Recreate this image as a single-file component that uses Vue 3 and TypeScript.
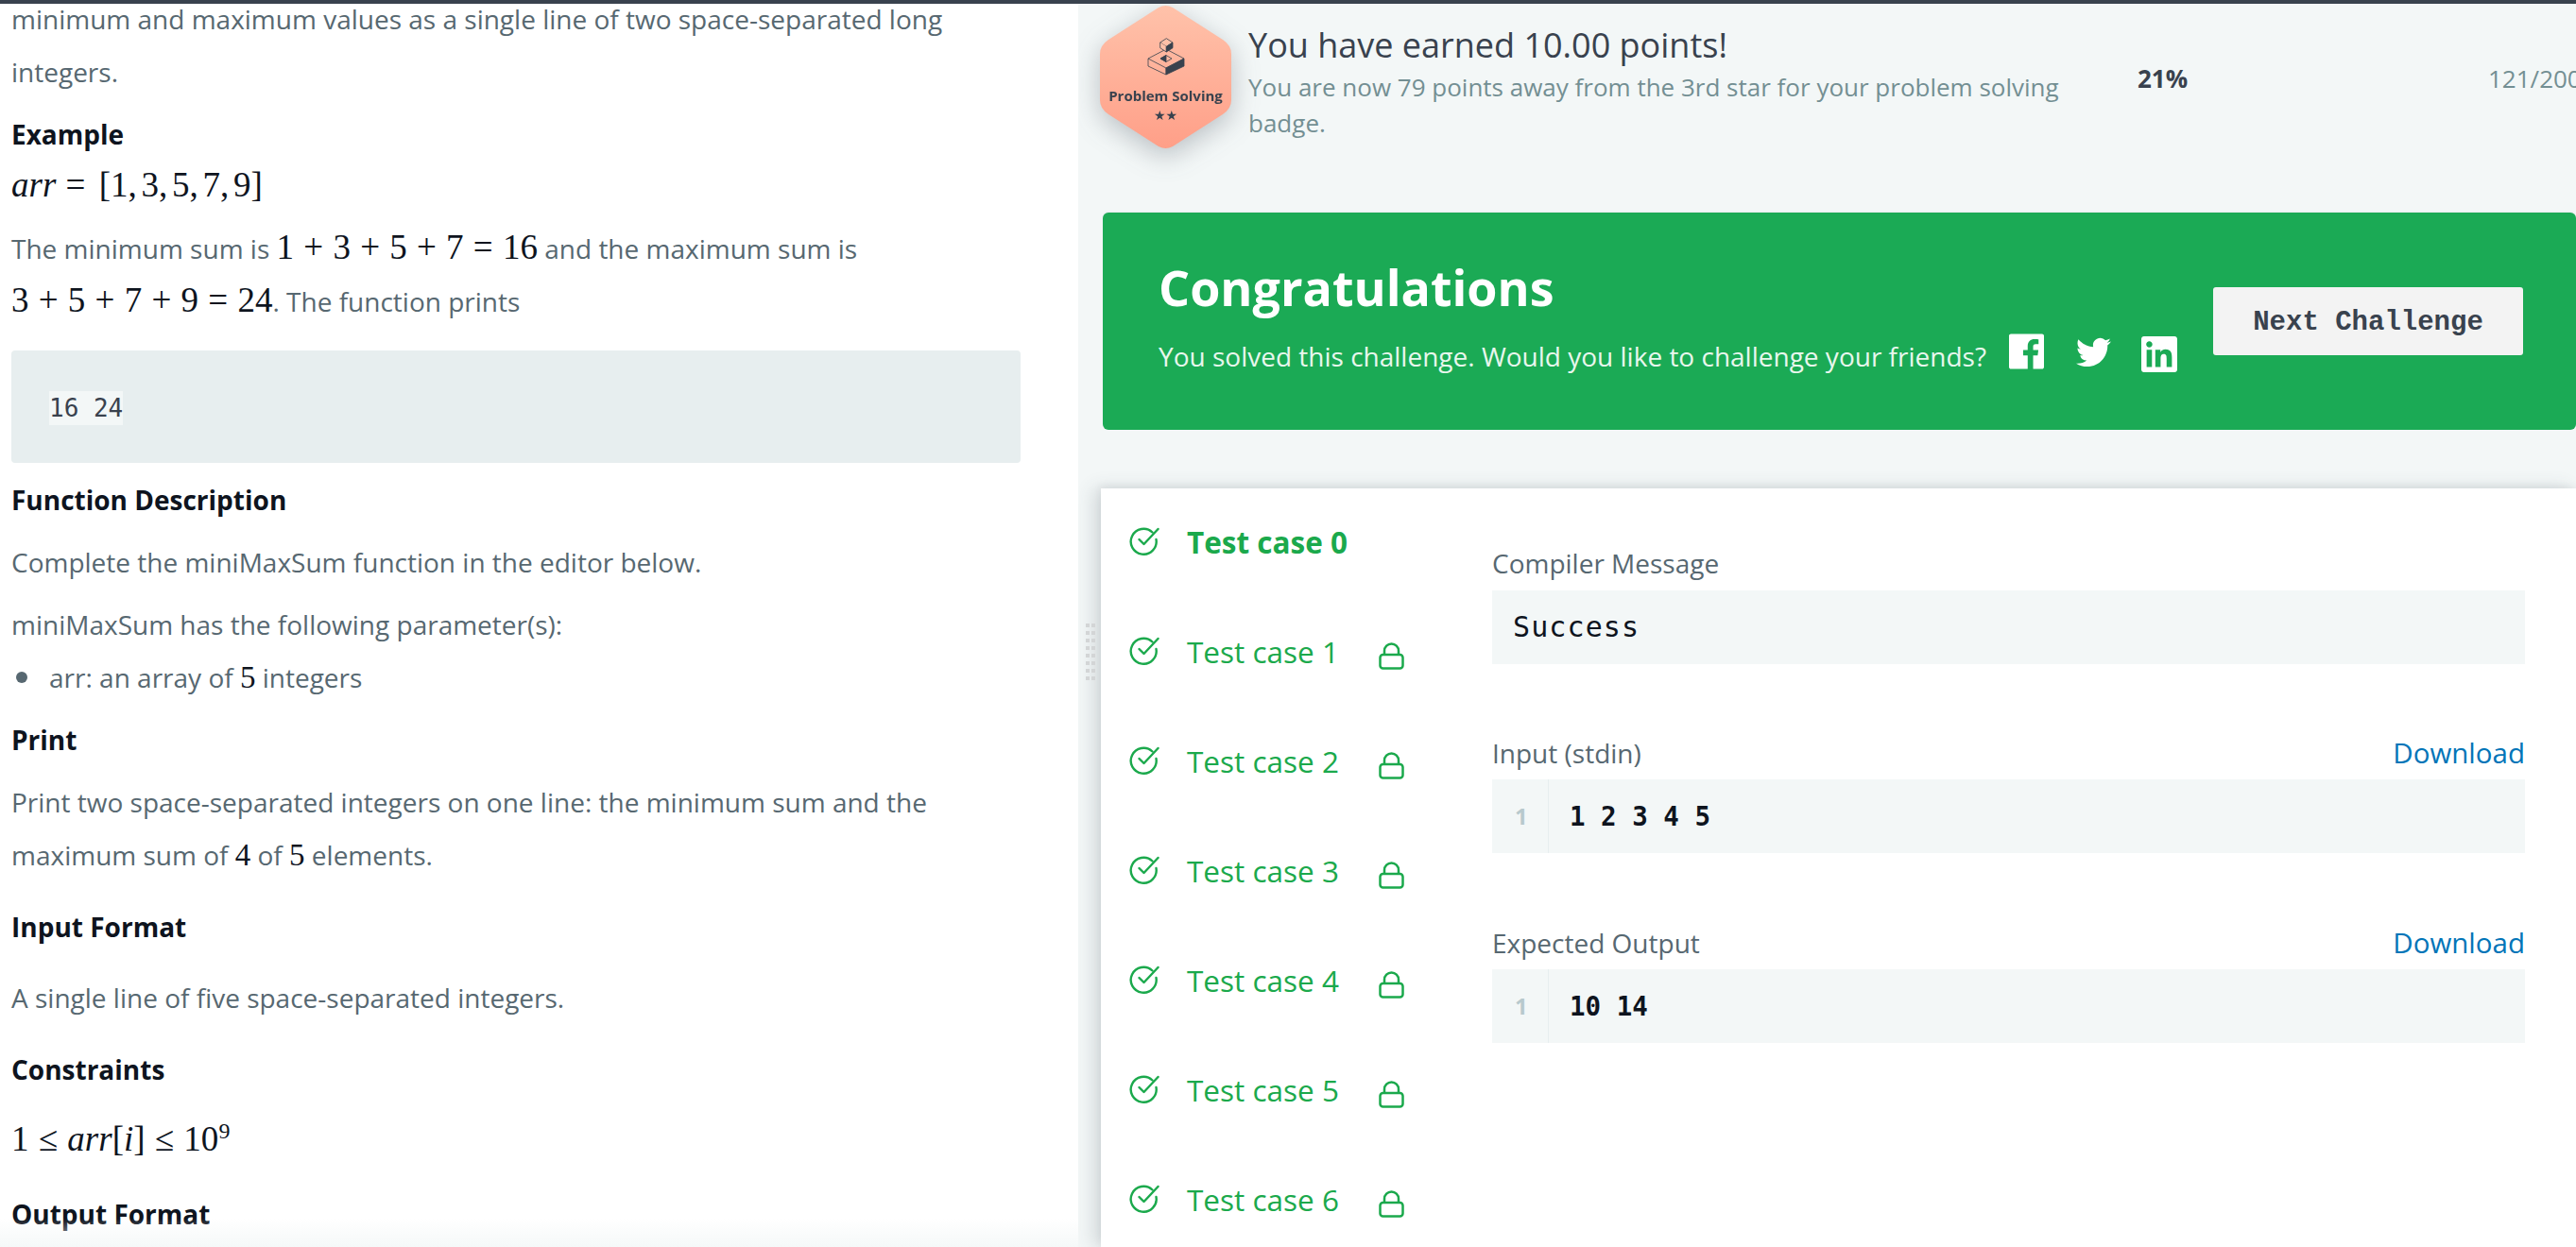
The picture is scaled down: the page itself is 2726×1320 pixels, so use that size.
<template>
  <div class="page">
    <div class="topbar"></div>
    <div class="columns">
      <section class="problem">
        <div class="problem-body">
          <p class="para">minimum and maximum values as a single line of two space-separated long<br />integers.</p>
          <h4 class="head mt-18">Example</h4>
          <p class="para mt-7"><span class="math math-big"><i>arr</i> = <span class="math-list">[1, 3, 5, 7, 9]</span></span></p>
          <p class="para mt-10">
            The minimum sum is <span class="math math-big">1 + 3 + 5 + 7 = 16</span> and the maximum sum is<br />
            <span class="math math-big">3 + 5 + 7 + 9 = 24</span>. The function prints
          </p>
          <pre class="sample"><code>16 24</code></pre>
          <h4 class="head mt-19">Function Description</h4>
          <p class="para mt-18">Complete the miniMaxSum function in the editor below.</p>
          <p class="para mt-10">miniMaxSum has the following parameter(s):</p>
          <ul class="params">
            <li>arr: an array of <span class="math">5</span> integers</li>
          </ul>
          <h4 class="head mt-18">Print</h4>
          <p class="para mt-18">
            Print two space-separated integers on one line: the minimum sum and the<br />
            maximum sum of <span class="math">4</span> of <span class="math">5</span> elements.
          </p>
          <h4 class="head mt-28">Input Format</h4>
          <p class="para mt-27">A single line of five space-separated integers.</p>
          <h4 class="head mt-28">Constraints</h4>
          <p class="para mt-27">
            <span class="math math-big">1 ≤ <i>arr</i>[<i>i</i>] ≤ 10<sup>9</sup></span>
          </p>
          <h4 class="head mt-30">Output Format</h4>
        </div>
        <div class="fade"></div>
      </section>

      <section class="result">
        <div class="grip">
          <span v-for="n in 16" :key="n"></span>
        </div>

        <header class="earned">
          <div class="badge">
            <svg class="badge-bg" width="139" height="153" viewBox="0 0 139 153">
              <defs>
                <linearGradient id="badgeFill" x1="0" y1="0" x2="0" y2="1">
                  <stop offset="0" stop-color="#ffc2aa" />
                  <stop offset="1" stop-color="#ff9f88" />
                </linearGradient>
              </defs>
              <path
                d="M62 3 Q69.500 -1 77 3 L130 37 Q139 43 139 52 L139 101 Q139 110 130 116 L77 150 Q69.500 154 62 150 L9 116 Q0 110 0 101 L0 52 Q0 43 9 37 Z"
                fill="url(#badgeFill)"
              />
              <g fill="none" stroke="#39424e" stroke-width="0.8" stroke-linejoin="round">
                <path d="M51 57 L70 47 L89 57 L70 67 Z" />
                <path d="M51 57 V65 L70 74 V67" />
                <path d="M70 67 L89 57 V65 L70 74 Z" fill="#39424e" />
                <path d="M64 57 L70 53.500 L76 57 L70 60.500 Z" fill="#ffb8a0" />
                <path d="M70 53.500 L64 57 L70 60.500 Z" fill="#39424e" />
                <path d="M70.300 35.700 L63.700 40 L70.300 44.300 L77 40 Z" fill="#ffc0a8" />
                <path d="M63.700 40 V45.700 L70.300 50 V44.300" fill="#ffc0a8" />
                <path d="M70.300 44.300 L77 40 V45.700 L70.300 50 Z" fill="#39424e" />
              </g>
            </svg>
            <div class="badge-name">Problem Solving</div>
            <div class="badge-stars">★★</div>
          </div>
          <div class="earned-text">
            <div class="earned-title">You have earned 10.00 points!</div>
            <div class="earned-sub">You are now 79 points away from the 3rd star for your problem solving badge.</div>
          </div>
          <div class="percent">21%</div>
          <div class="fraction">121/200</div>
        </header>

        <div class="congrats">
          <div class="congrats-copy">
            <h2 class="congrats-title">Congratulations</h2>
            <div class="congrats-line">
              <span>You solved this challenge. Would you like to challenge your friends?</span>
              <svg class="social fb" width="37" height="38" viewBox="0 0 24 24" fill="#fff">
                <path d="M22.675 0H1.325C.593 0 0 .593 0 1.325v21.351C0 23.407.593 24 1.325 24H12.820v-9.294H9.692v-3.622h3.128V8.413c0-3.100 1.893-4.788 4.659-4.788 1.325 0 2.463.099 2.795.143v3.240l-1.918.001c-1.504 0-1.795.715-1.795 1.763v2.313h3.587l-.467 3.622h-3.120V24h6.116c.730 0 1.323-.593 1.323-1.325V1.325C24 .593 23.407 0 22.675 0z" />
              </svg>
              <svg class="social tw" width="37" height="32" viewBox="0 0 24 20" fill="#fff">
                <path d="M23.953 2.570a10 10 0 01-2.825.775 4.958 4.958 0 002.163-2.723c-.951.555-2.005.959-3.127 1.184a4.920 4.920 0 00-8.384 4.482C7.690 6.095 4.067 4.130 1.640 1.162a4.822 4.822 0 00-.666 2.475c0 1.710.870 3.213 2.188 4.096a4.904 4.904 0 01-2.228-.616v.060a4.923 4.923 0 003.946 4.827 4.996 4.996 0 01-2.212.085 4.936 4.936 0 004.604 3.417 9.867 9.867 0 01-6.102 2.105c-.390 0-.779-.023-1.170-.067a13.995 13.995 0 007.557 2.209c9.053 0 13.998-7.496 13.998-13.985 0-.210 0-.420-.015-.630A9.935 9.935 0 0024 2.590z" />
              </svg>
              <svg class="social in" width="38" height="38" viewBox="0 0 24 24" fill="#fff">
                <path d="M20.447 20.452h-3.554v-5.569c0-1.328-.027-3.037-1.852-3.037-1.853 0-2.136 1.445-2.136 2.939v5.667H9.351V9h3.414v1.561h.046c.477-.900 1.637-1.850 3.370-1.850 3.601 0 4.267 2.370 4.267 5.455v6.286zM5.337 7.433c-1.144 0-2.063-.926-2.063-2.065 0-1.138.920-2.063 2.063-2.063 1.140 0 2.064.925 2.064 2.063 0 1.139-.925 2.065-2.064 2.065zm1.782 13.019H3.555V9h3.564v11.452zM22.225 0H1.771C.792 0 0 .774 0 1.729v20.542C0 23.227.792 24 1.771 24h20.451C23.200 24 24 23.227 24 22.271V1.729C24 .774 23.200 0 22.222 0h.003z" />
              </svg>
            </div>
          </div>
          <button class="next-btn">Next Challenge</button>
        </div>

        <div class="tests">
          <ul class="case-list">
            <li v-for="tc in cases" :key="tc.id" class="case" :class="{ 'case-active': tc.id === 0 }">
              <svg class="check" width="32" height="30" viewBox="0 0 32 30" fill="none" stroke="#1ba94c" stroke-width="2.400" stroke-linecap="round" stroke-linejoin="round">
                <path d="M24.500 5.500 A13.500 13.500 0 1 0 28.500 13" />
                <path d="M10.500 13 L15.500 18 L30.500 2" />
              </svg>
              <span class="case-name">Test case {{ tc.id }}</span>
              <svg v-if="tc.locked" class="lock" width="27" height="29" viewBox="0 0 27 29" fill="none" stroke="#1ba94c" stroke-width="2.500" stroke-linejoin="round">
                <rect x="1.500" y="13" width="24" height="14.500" rx="3" />
                <path d="M6 13 V9 a7.500 7.500 0 0 1 15 0 V13" />
              </svg>
            </li>
          </ul>
          <div class="detail">
            <div class="label first">Compiler Message</div>
            <div class="message">Success</div>
            <div v-for="blk in blocks" :key="blk.title" class="io">
              <div class="label-row">
                <span class="label">{{ blk.title }}</span>
                <a class="download">Download</a>
              </div>
              <div class="io-box">
                <span class="gutter">1</span>
                <code class="io-code">{{ blk.value }}</code>
              </div>
            </div>
          </div>
        </div>
      </section>
    </div>
  </div>
</template>

<script setup lang="ts">
interface TestCase {
  id: number;
  locked: boolean;
}

const cases: TestCase[] = [0, 1, 2, 3, 4, 5, 6].map((id) => ({ id, locked: id !== 0 }));

const blocks = [
  { title: 'Input (stdin)', value: '1 2 3 4 5' },
  { title: 'Expected Output', value: '10 14' },
];
</script>

<style>
html,
body {
  margin: 0;
  overflow: hidden;
}
</style>

<style scoped>
.page {
  width: 2726px;
  height: 1320px;
  overflow: hidden;
  display: flex;
  flex-direction: column;
  font-family: "Open Sans", sans-serif;
  background: #fff;
}

.topbar {
  height: 4px;
  background: #39424e;
  flex-shrink: 0;
}

.columns {
  flex: 1;
  display: flex;
  min-height: 0;
}

.problem {
  position: relative;
  width: 1141px;
  flex-shrink: 0;
  overflow: hidden;
  background: #fff;
}

.problem-body {
  margin-top: -12px;
  padding: 0 60px 0 12px;
}

.para {
  margin: 0;
  font-size: 28px;
  line-height: 56px;
  color: #576871;
}

.head {
  margin: 0;
  font-size: 28px;
  line-height: 40px;
  font-weight: 700;
  color: #0e141e;
}

.mt-7 { margin-top: 7px; }
.mt-10 { margin-top: 10px; }
.mt-18 { margin-top: 18px; }
.mt-19 { margin-top: 19px; }
.mt-27 { margin-top: 27px; }
.mt-28 { margin-top: 28px; }
.mt-30 { margin-top: 30px; }

.math {
  font-family: "Liberation Serif", serif;
  font-size: 33px;
  line-height: 0;
  color: #0e141e;
}

.math-big {
  font-size: 37px;
  word-spacing: 1px;
}

.math-list {
  margin-left: 4px;
  word-spacing: -4.500px;
}

.math sup {
  font-size: 24px;
  line-height: 0;
}

.sample {
  margin: 24px 0 0;
  width: 1068px;
  height: 119px;
  padding: 43px 0 0 40px;
  box-sizing: border-box;
  background: #e7eeef;
  border-radius: 4px;
  font-family: "DejaVu Sans Mono", monospace;
  font-size: 26px;
  line-height: 36px;
  color: #39424e;
}

.sample code {
  display: inline-block;
  background: #f3f7f7;
  font-family: inherit;
}

.params {
  margin: 0;
  padding: 0;
  list-style: none;
  font-size: 28px;
  line-height: 56px;
  color: #576871;
}

.params li {
  display: flex;
  align-items: center;
  white-space: pre;
}

.params li::before {
  content: "";
  width: 12px;
  height: 12px;
  margin: 0 23px 0 5px;
  border-radius: 50%;
  background: #576871;
}

.fade {
  position: absolute;
  left: 0;
  right: 0;
  bottom: 0;
  height: 30px;
  background: linear-gradient(rgba(243, 247, 247, 0), rgba(243, 247, 247, 0.8));
}

.result {
  position: relative;
  flex: 1;
  min-width: 0;
  overflow: hidden;
  background: #f3f7f7;
}

.grip {
  position: absolute;
  left: 8px;
  top: 656px;
  display: grid;
  grid-template-columns: repeat(2, 4px);
  gap: 4px 2px;
}

.grip span {
  height: 4px;
  background: #d3d5d6;
}

.earned {
  display: flex;
  align-items: flex-start;
  height: 221px;
  padding: 1px 0 0 23px;
  box-sizing: border-box;
  white-space: nowrap;
}

.badge {
  position: relative;
  width: 139px;
  height: 153px;
  flex-shrink: 0;
  filter: drop-shadow(0 8px 14px rgba(57, 66, 78, 0.3));
}

.badge-bg {
  display: block;
}

.badge-name {
  position: absolute;
  left: 0;
  right: 0;
  top: 87px;
  text-align: center;
  font-size: 15px;
  line-height: 18px;
  font-weight: 700;
  color: #39424e;
}

.badge-stars {
  position: absolute;
  left: 0;
  right: 0;
  top: 108px;
  text-align: center;
  font-family: "DejaVu Sans", sans-serif;
  font-size: 14px;
  line-height: 18px;
  color: #39424e;
}

.earned-text {
  width: 941px;
  margin-left: 18px;
  flex-shrink: 0;
  white-space: normal;
}

.earned-title {
  margin-top: 20px;
  font-size: 36px;
  line-height: 46px;
  color: #39424e;
}

.earned-sub {
  width: 900px;
  margin-top: 2px;
  font-size: 26px;
  line-height: 38px;
  color: #738f93;
}

.percent {
  width: 371px;
  flex-shrink: 0;
  margin-top: 58px;
  font-size: 26px;
  line-height: 40px;
  font-weight: 700;
  color: #39424e;
}

.fraction {
  margin-top: 58px;
  font-size: 26px;
  line-height: 40px;
  color: #738f93;
}

.congrats {
  display: flex;
  justify-content: space-between;
  align-items: flex-start;
  height: 230px;
  margin-left: 26px;
  padding: 49px 56px 0 59px;
  box-sizing: border-box;
  background: #1baa55;
  border-radius: 6px;
  box-shadow: 0 -1px 2px rgba(57, 66, 78, 0.06);
  color: #fff;
}

.congrats-title {
  margin: 0;
  font-size: 52px;
  line-height: 60px;
  font-weight: 700;
}

.congrats-line {
  display: flex;
  align-items: center;
  margin-top: 23px;
  font-size: 28px;
  line-height: 40px;
  white-space: nowrap;
  color: #e8f7ed;
}

.social.fb {
  margin: -11px 0 0 24px;
}

.social.tw {
  margin: -8px 0 0 34px;
}

.social.in {
  margin: -5px 0 0 32px;
}

.next-btn {
  width: 328px;
  height: 72px;
  margin-top: 30px;
  padding: 3px 0 0;
  border: 0;
  border-radius: 3px;
  background: #f3f3f3;
  font-family: "Liberation Mono", monospace;
  font-size: 29px;
  font-weight: 700;
  color: #39424e;
}

.tests {
  display: flex;
  height: 803px;
  margin: 62px 0 0 24px;
  background: #fff;
  box-shadow: -8px 0 18px rgba(57, 66, 78, 0.16), 0 -2px 8px rgba(57, 66, 78, 0.08);
}

.case-list {
  width: 413px;
  flex-shrink: 0;
  margin: 0;
  padding: 0 0 0 30px;
  box-sizing: border-box;
  list-style: none;
}

.case {
  display: flex;
  align-items: center;
  height: 116px;
  font-size: 31.500px;
  color: #1ba94c;
}

.case-active {
  font-weight: 700;
}

.check {
  flex-shrink: 0;
  margin-top: -4px;
}

.case-name {
  width: 203px;
  flex-shrink: 0;
  margin: -2px 0 0 29px;
  line-height: 40px;
  white-space: nowrap;
}

.lock {
  flex-shrink: 0;
  margin-top: 6px;
}

.detail {
  width: 1093px;
  flex-shrink: 0;
  margin-left: 1px;
}

.label {
  font-size: 28px;
  line-height: 40px;
  color: #576871;
}

.label.first {
  display: block;
  margin-top: 59px;
}

.message {
  height: 78px;
  margin-top: 9px;
  padding-left: 22px;
  background: #f3f7f7;
  font-family: "DejaVu Sans Mono", monospace;
  font-size: 30px;
  letter-spacing: 1.100px;
  line-height: 78px;
  color: #0e141e;
}

.io {
  margin-top: 74px;
}

.io + .io {
  margin-top: 75px;
}

.label-row {
  display: flex;
  justify-content: space-between;
}

.download {
  font-size: 29.500px;
  line-height: 40px;
  color: #0275b8;
}

.io-box {
  display: flex;
  height: 78px;
  margin-top: 8px;
  background: #f3f7f7;
}

.gutter {
  width: 60px;
  flex-shrink: 0;
  border-right: 1px solid #e7eeef;
  box-sizing: border-box;
  padding-left: 24px;
  font-family: "Open Sans", sans-serif;
  font-size: 24px;
  font-weight: 700;
  line-height: 78px;
  color: #b8c9cd;
}

.io-code {
  margin-left: 22px;
  font-family: "DejaVu Sans Mono", monospace;
  font-size: 27.500px;
  font-weight: 700;
  line-height: 78px;
  color: #0e141e;
}
</style>
